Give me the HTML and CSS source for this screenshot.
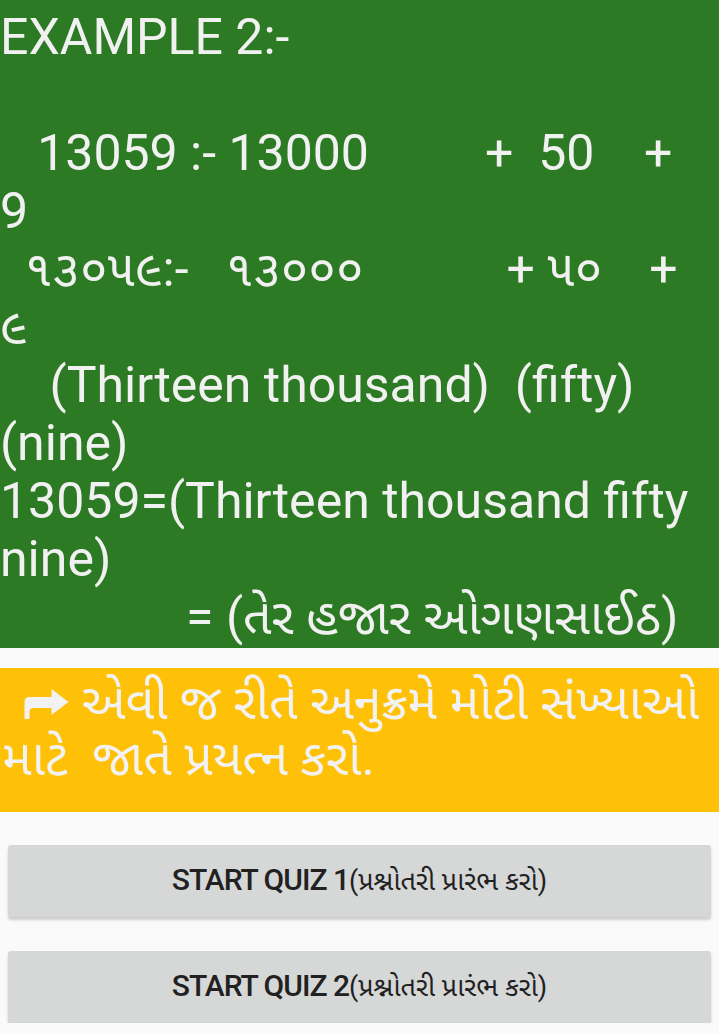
FILE: index.html
```html
<!DOCTYPE html>
<html lang="gu">
<head>
<meta charset="utf-8">
<title>Example 2</title>
<link rel="stylesheet" href="styles.css">
</head>
<body>
<main class="page">
  <section class="example">
    <div class="line">EXAMPLE 2:-</div>
    <div class="line"> </div>
    <div class="line">   13059 :- 13000<span class="gap gap-a"></span>+  50    +</div>
    <div class="line">9</div>
    <div class="line">  ૧૩૦૫૯:-   ૧૩૦૦૦<span class="gap gap-b"></span>+ ૫૦<span class="gap gap-c"></span>+</div>
    <div class="line">૯</div>
    <div class="line">    (Thirteen thousand)  (fifty)</div>
    <div class="line">(nine)</div>
    <div class="line">13059=(Thirteen thousand fifty</div>
    <div class="line">nine)</div>
    <div class="line">               = (તેર હજાર ઓગણસાઈઠ)</div>
  </section>

  <section class="note">
    <div class="note-line"><svg class="arrow" viewBox="0 0 44 30" aria-hidden="true"><path d="M0 30 L0 13 Q0 8 5 8 L27 8 L27 0 L44 13 L27 26 L27 19 L9 19 Q5 19 5 23 L5 30 Z" fill="#f2f2f2"/></svg> એવી જ રીતે અનુક્રમે મોટી સંખ્યાઓ</div>
    <div class="note-line">માટે  જાતે પ્રયત્ન કરો.</div>
  </section>

  <div class="actions">
    <button class="quiz-btn" type="button"><span class="en">START QUIZ 1</span><span class="gu">(પ્રશ્નોતરી પ્રારંભ કરો)</span></button>
    <button class="quiz-btn" type="button"><span class="en">START QUIZ 2</span><span class="gu">(પ્રશ્નોતરી પ્રારંભ કરો)</span></button>
  </div>
</main>
</body>
</html>
```

FILE: styles.css
```css
html, body {
  margin: 0;
  padding: 0;
  background: #fafafa;
}

.page {
  width: 719px;
  font-family: Roboto, "Noto Sans Gujarati", "Lohit Gujarati", "Noto Sans", sans-serif;
}

.example {
  background: #2d7a24;
  color: #f1f1f1;
  font-size: 50px;
  line-height: 58px;
  height: 648px;
  box-sizing: border-box;
  padding: 8px 0 0 0;
}

.line {
  white-space: pre;
  height: 58px;
}

.gap {
  display: inline-block;
}

.gap-a {
  width: 116px;
}

.gap-b {
  width: 143px;
}

.gap-c {
  width: 47px;
}

.note {
  margin-top: 20px;
  background: #ffc107;
  color: #f2f2f2;
  font-size: 50px;
  line-height: 56px;
  height: 144px;
  box-sizing: border-box;
  padding: 6px 0 0 2px;
}

.note-line {
  white-space: pre;
}

.arrow {
  width: 45px;
  height: 30px;
  margin-left: 22px;
  vertical-align: 0;
}

.actions {
  display: flex;
  flex-direction: column;
  gap: 34px;
  padding: 33px 8px 0 8px;
}

.quiz-btn {
  height: 72px;
  border: none;
  border-radius: 3px;
  background: #d6d7d7;
  color: #212121;
  font-family: Roboto, "Noto Sans Gujarati", sans-serif;
  font-weight: 500;
  font-size: 28px;
  box-shadow: 0 3px 3px rgba(0, 0, 0, 0.18);
  padding: 0;
}

.quiz-btn .en {
  font-size: 30px;
  letter-spacing: -1px;
}

.quiz-btn .gu {
  font-weight: 400;
  font-size: 27px;
}
```
